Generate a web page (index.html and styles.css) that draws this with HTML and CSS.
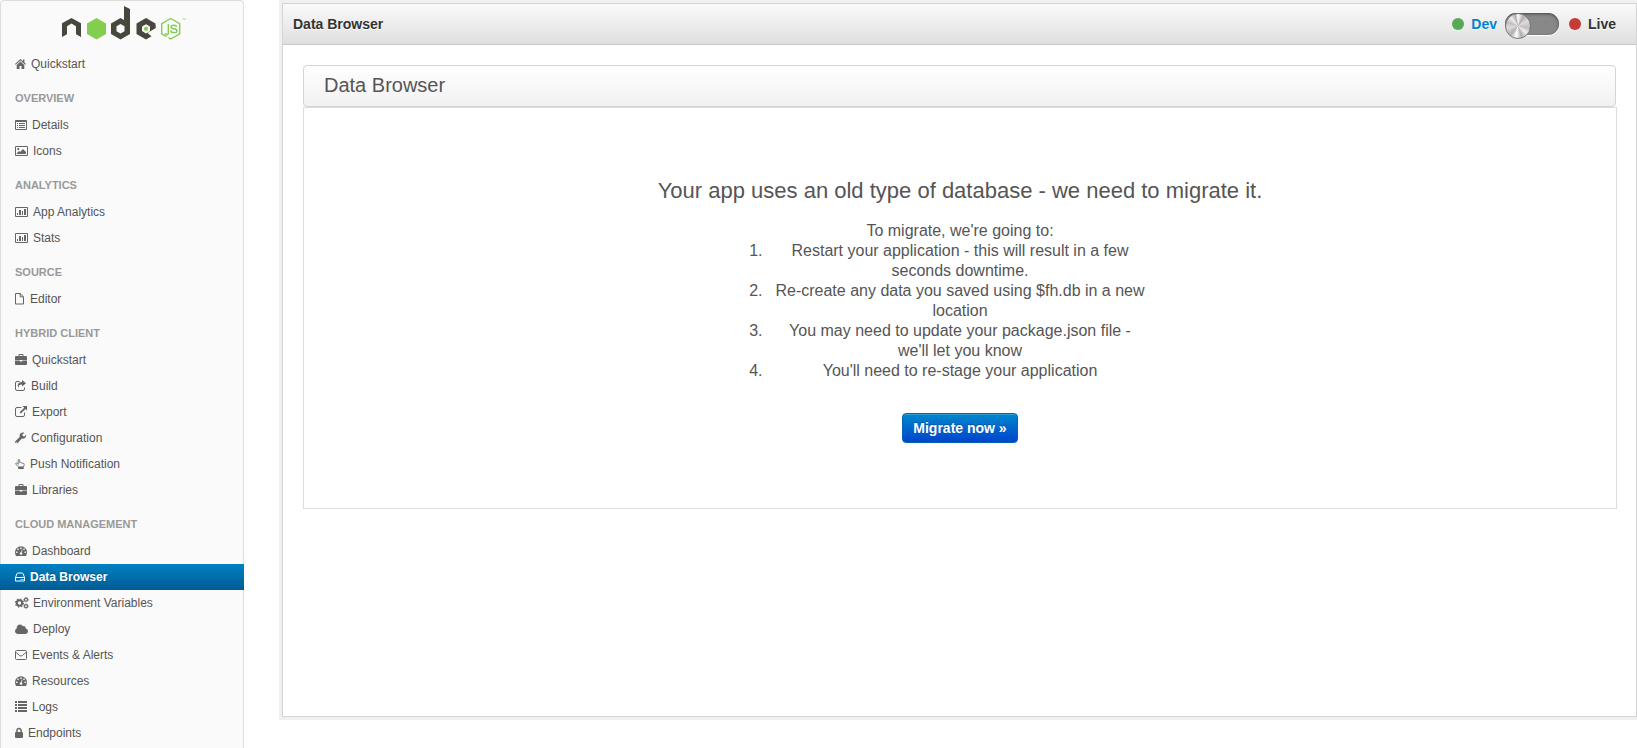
FILE: index.html
```html
<!DOCTYPE html>
<html lang="en">
<head>
<meta charset="utf-8">
<title>Data Browser</title>
<link rel="stylesheet" href="styles.css">
</head>
<body>
<svg class="sprite" aria-hidden="true">
  <symbol id="home" viewBox="0 0 12 12"><path d="M5.5 1 0 5.9l.8.8L5.5 2.6l4.7 4.1.8-.8-1.6-1.4V1.4H8v1.8zM5.5 3.6 1.7 7v4h2.8V8h2v3h2.8V7z"/></symbol>
  <symbol id="list-alt" viewBox="0 0 13 12"><path fill-rule="evenodd" d="M1 1h10q1 0 1 1v8q0 1-1 1H1q-1 0-1-1V2q0-1 1-1zm0 2v7h10V3zM2 4h1v1H2zm2 0h6v1H4zM2 6h1v1H2zm2 0h6v1H4zM2 8h1v1H2zm2 0h6v1H4z"/></symbol>
  <symbol id="picture" viewBox="0 0 14 12"><path fill-rule="evenodd" d="M1 1h11q1 0 1 1v8q0 1-1 1H1q-1 0-1-1V2q0-1 1-1zm0 1v8h11V2zm1 7V8l2-2 1 1 3-3 3 3v2z"/><circle cx="3.2" cy="4.1" r="1.1"/></symbol>
  <symbol id="chart" viewBox="0 0 14 12"><path fill-rule="evenodd" d="M1 1h11q1 0 1 1v8q0 1-1 1H1q-1 0-1-1V2q0-1 1-1zm0 1v8h11V2zM2 7h1v2H2zm2-3h2v5H4zm3 1h1v4H7zM9 3h2v6H9z"/></symbol>
  <symbol id="file" viewBox="0 0 11 12"><path fill="none" stroke="currentColor" d="M.5.5h4.700l3.300 3.300v7.200H.5zM5.200.5v3.300h3.300"/></symbol>
  <symbol id="briefcase" viewBox="0 0 13 12"><path fill-rule="evenodd" d="M3.500 2V1q0-1 1-1h3q1 0 1 1v1H11q1 0 1 1v3H0V3q0-1 1-1zm1 0h3V1h-3zM0 6.500h4.500q0 1 1 1h1q1 0 1-1H12V10q0 1-1 1H1q-1 0-1-1z"/></symbol>
  <symbol id="share" viewBox="0 0 12 12"><path d="M7 0l4 3.200-4 3.200V4.500C4.500 4.500 3.300 5.400 3.800 8 1.500 5 3.300 2 7 2z"/><path fill="none" stroke="currentColor" d="M4.500 1.500H2Q.5 1.500.5 3v6q0 1.500 1.500 1.500h6q1.500 0 1.500-1.500V7.500"/></symbol>
  <symbol id="external" viewBox="0 0 13 12"><path d="M7.500 0H12v4.500l-1.500-1.500-4.600 4.600-1.300-1.300L9.200 1.700z"/><path fill="none" stroke="currentColor" d="M6.500 1.500H2Q.5 1.500.5 3v6q0 1.500 1.500 1.500h6q1.500 0 1.500-1.500V6.500"/></symbol>
  <symbol id="wrench" viewBox="0 0 12 12"><path fill-rule="evenodd" d="M.4 9.200 4.700 5C4 2.300 6.300-.1 9.300.8L7.400 2.500l.3 1.500 1.600.4 1.800-1.600c.4 2.600-1.700 4.400-4.200 3.800L2.600 11C1.300 12-.8 10.600.4 9.200zM1.400 10a.5.5 0 1 0 .1 0z"/></symbol>
  <symbol id="hand" viewBox="0 0 12 12"><path fill="none" stroke="currentColor" stroke-width=".9" stroke-linejoin="round" d="M3.500 6.800V1.500q.8-1.500 1.600 0v3q1-.5 1.600.3 1-.5 1.600.4 1.700-.3 1.700 1.200 0 1.800-1 3H4Q2.500 7.500.8 6.200C.3 5 2 4.300 3.500 6"/><path d="M3.500 9h6v2.500h-6z"/></symbol>
  <symbol id="dashboard" viewBox="0 0 13 12"><path fill-rule="evenodd" d="M6 1.200A6 6 0 0 0 0 7q0 2 1 4h10q1-2 1-4a6 6 0 0 0-6-5.800zM5.200 2.500h1.500V4H5.200zM2.300 3.600h1.400v1.400H2.300zm6 0h1.400v1.400H8.300zM1.100 6.500h1.400v1.400H1.100zm8.400 0h1.400v1.400H9.500zM6.900 4.500l.7.200-.8 2.800q1 .8.400 1.800-.6.800-1.700.4-1.300-.8-.6-1.900.4-.6 1.200-.6z"/></symbol>
  <symbol id="hdd" viewBox="0 0 11 12"><path fill="none" stroke="currentColor" d="M.5 6.500 2 2.500q.2-.5 1-.5h4q.8 0 1 .5l1.500 4V10H.5V6.500h9"/><path d="M5.500 8h1v1h-1zm2 0h1v1h-1z"/></symbol>
  <symbol id="cogs" viewBox="0 0 14 12"><g fill="none" stroke="currentColor"><circle cx="4.500" cy="6" r="2.700" stroke-width="2"/><circle cx="4.500" cy="6" r="4" stroke-dasharray="1.570" stroke-width="1.200"/><circle cx="11" cy="2.700" r="1.500" stroke-width="1.200"/><circle cx="11" cy="2.700" r="2.300" stroke-dasharray="1.030" stroke-width=".7"/><circle cx="11" cy="9.200" r="1.500" stroke-width="1.200"/><circle cx="11" cy="9.200" r="2.300" stroke-dasharray="1.030" stroke-width=".7"/></g></symbol>
  <symbol id="cloud" viewBox="0 0 14 12"><path d="M3 11Q0 10.700 0 8q0-1.600 1.700-2.500C1.400 3.300 3 1.500 5 1.500q2 0 3 1.700 2.400-.6 2.700 2Q13 6 13 8.200q0 2.500-2.600 2.800z"/></symbol>
  <symbol id="envelope" viewBox="0 0 13 12"><path fill="none" stroke="currentColor" d="M1.500 1.500h9q1 0 1 1v7q0 1-1 1h-9q-1 0-1-1v-7q0-1 1-1zM.8 3.200 4.800 6.600q1.200 1 2.400 0l4-3.400"/></symbol>
  <symbol id="list" viewBox="0 0 13 12"><path d="M0 0h2v2H0zm3 0h9v2H3zM0 3h2v2H0zm3 0h9v2H3zM0 6h2v2H0zm3 0h9v2H3zM0 9h2v2H0zm3 0h9v2H3z"/></symbol>
  <symbol id="lock" viewBox="0 0 9 12"><path fill-rule="evenodd" d="M1.200 5V3.500Q1.400.8 4 .8t2.800 2.700V5Q8 5 8 6v4q0 1-1 1H1q-1 0-1-1V6q0-1 1.200-1zm1.500 0h2.600V3.500Q5.200 2.200 4 2.200T2.700 3.500z"/></symbol>
</svg>

<div class="layout">
  <nav class="sidebar" aria-label="App sections">
    <svg class="logo" viewBox="0 0 124 34" role="img" aria-label="node.js">
      <g fill="#46483e">
        <path d="M0 17.300 9.500 12l9.500 5.300V31l-5-2.800v-8L9.500 17.500 5 20.200v8L0 31z"/>
        <path fill-rule="evenodd" d="M62 0l6 3v25l-9.500 5.500L49 28V17.500l9.500-5.500 3.500 2zM58.500 18 54.500 20.300v4.900l4 2.300 4-2.300v-4.900z"/>
        <path fill-rule="evenodd" d="M74.500 17.500 84 12l9.500 5.500v4.500L85.500 27l4 3.200-5.500 3.300-9.500-5.500zM84 18.300l-4 2.200v4.600l4 2.300 4-2.300v-4.600z"/>
      </g>
      <path fill="#83cd4f" d="M34.500 12 44 17.500V28l-9.500 5.500L25 28V17.500z"/>
      <path fill="#46483e" d="M88 20.500l5.500-1V22L88 25z"/>
      <circle cx="84" cy="22.800" r="2.100" fill="#83cd4f"/>
      <g fill="none" stroke="#83cd4f" stroke-width="1.400">
        <path d="M104.500 30.700l-4.800-2.800V17.600l9-5.100 9 5.100v10.300l-9 5.100-2.200-1.300"/>
        <path d="M106.300 17.800v9q0 2-1.300 1.900l-2.300-1.200"/>
        <path d="M114.600 20.900q-.3-1.700-2.800-1.700-2.600 0-2.600 1.700 0 1.500 2.700 1.800 3.100.3 3.100 2 0 1.900-3 1.900-3.200 0-3.300-2.200"/>
      </g>
      <path fill="#83cd4f" d="M120.500 12.500h1.500v.7h-1.500zm2 0h.8v1.500h-.8z"/>
    </svg>
    <ul class="nav">
      <li><a href="#"><svg class="icon w12"><use href="#home"/></svg>Quickstart</a></li>
    </ul>
    <h2>Overview</h2>
    <ul class="nav">
      <li><a href="#"><svg class="icon w13"><use href="#list-alt"/></svg>Details</a></li>
      <li><a href="#"><svg class="icon w14"><use href="#picture"/></svg>Icons</a></li>
    </ul>
    <h2>Analytics</h2>
    <ul class="nav">
      <li><a href="#"><svg class="icon w14"><use href="#chart"/></svg>App Analytics</a></li>
      <li><a href="#"><svg class="icon w14"><use href="#chart"/></svg>Stats</a></li>
    </ul>
    <h2>Source</h2>
    <ul class="nav">
      <li><a href="#"><svg class="icon w11"><use href="#file"/></svg>Editor</a></li>
    </ul>
    <h2>Hybrid Client</h2>
    <ul class="nav">
      <li><a href="#"><svg class="icon w13"><use href="#briefcase"/></svg>Quickstart</a></li>
      <li><a href="#"><svg class="icon w12"><use href="#share"/></svg>Build</a></li>
      <li><a href="#"><svg class="icon w13"><use href="#external"/></svg>Export</a></li>
      <li><a href="#"><svg class="icon w12"><use href="#wrench"/></svg>Configuration</a></li>
      <li><a href="#"><svg class="icon w11"><use href="#hand"/></svg>Push Notification</a></li>
      <li><a href="#"><svg class="icon w13"><use href="#briefcase"/></svg>Libraries</a></li>
    </ul>
    <h2>Cloud Management</h2>
    <ul class="nav">
      <li><a href="#"><svg class="icon w13"><use href="#dashboard"/></svg>Dashboard</a></li>
      <li><a class="active" href="#" aria-current="page"><svg class="icon w11"><use href="#hdd"/></svg>Data Browser</a></li>
      <li><a href="#"><svg class="icon w14"><use href="#cogs"/></svg>Environment Variables</a></li>
      <li><a href="#"><svg class="icon w14"><use href="#cloud"/></svg>Deploy</a></li>
      <li><a href="#"><svg class="icon w13"><use href="#envelope"/></svg>Events &amp; Alerts</a></li>
      <li><a href="#"><svg class="icon w13"><use href="#dashboard"/></svg>Resources</a></li>
      <li><a href="#"><svg class="icon w13"><use href="#list"/></svg>Logs</a></li>
      <li><a href="#"><svg class="icon w9"><use href="#lock"/></svg>Endpoints</a></li>
    </ul>
  </nav>

  <main class="main">
    <header class="topbar">
      <h1>Data Browser</h1>
      <div class="env">
        <span class="dot dev"></span>
        <label class="current" for="env-switch">Dev</label>
        <input class="switch" id="env-switch" type="checkbox" role="switch">
        <span class="dot live"></span>
        <label for="env-switch">Live</label>
      </div>
    </header>
    <section class="content">
      <h2 class="panel-title">Data Browser</h2>
      <div class="panel">
        <h3>Your app uses an old type of database - we need to migrate it.</h3>
        <div class="steps">
          <p>To migrate, we're going to:</p>
          <ol>
            <li>Restart your application - this will result in a few seconds downtime.</li>
            <li>Re-create any data you saved using $fh.db in a new location</li>
            <li>You may need to update your package.json file - we'll let you know</li>
            <li>You'll need to re-stage your application</li>
          </ol>
        </div>
        <button class="migrate" type="button">Migrate now »</button>
      </div>
    </section>
  </main>
</div>
</body>
</html>
```
FILE: styles.css
```css
* {
  box-sizing: border-box;
}

body {
  margin: 0;
  background: #fff;
  color: #555;
  font-family: "Liberation Sans", Arial, sans-serif;
  font-size: 13px;
  line-height: 20px;
}

h1, h2, h3, p, ul, ol {
  margin: 0;
  padding: 0;
}

.sprite {
  position: absolute;
  width: 0;
  height: 0;
}

.layout {
  display: flex;
  gap: 38px;
  height: 100vh;
  overflow: hidden;
}

.sidebar {
  flex: 0 0 244px;
  min-height: 100%;
  border: 1px solid #ddd;
  border-bottom: 0;
  border-radius: 4px 4px 0 0;
  background: #fafafa;
}

.logo {
  display: block;
  width: 124px;
  height: 34px;
  margin: 5px 0 11px 61px;
}

.sidebar h2 {
  margin-top: 8px;
  padding: 3px 14px 4px;
  color: #999;
  font-size: 11px;
  text-transform: uppercase;
}

.nav {
  list-style: none;
}

.nav a {
  display: flex;
  align-items: center;
  gap: 4px;
  margin: 0 -1px;
  padding: 3px 15px;
  color: #555;
  font-size: 12px;
  text-decoration: none;
}

.nav .active {
  background: linear-gradient(#0081c2, #005b94);
  color: #fff;
  font-weight: bold;
  text-shadow: 0 -1px 0 rgba(0, 0, 0, .2);
}

.icon {
  flex: none;
  height: 12px;
  color: #666;
  fill: currentColor;
}

.active .icon {
  color: #fff;
}

.w9 { width: 9px; }
.w11 { width: 11px; }
.w12 { width: 12px; }
.w13 { width: 13px; }
.w14 { width: 14px; }

.main {
  flex: 1;
  min-height: 400px;
  margin: 3px 0 31px;
  border: 1px solid #d4d4d4;
  background: #fff;
  box-shadow: 0 0 0 3px #f0f0f0;
}

.topbar {
  display: flex;
  align-items: center;
  justify-content: space-between;
  height: 41px;
  padding: 0 20px 0 10px;
  border-bottom: 1px solid #c8c8c8;
  background: linear-gradient(#fafafa, #dfdfdf);
  color: #333;
  font-size: 14px;
  font-weight: bold;
  text-shadow: 0 1px 0 #fff;
}

.topbar h1 {
  font-size: 14px;
}

.env {
  display: flex;
  align-items: center;
}

.dot {
  width: 12px;
  height: 12px;
  margin-right: 7px;
  border-radius: 50%;
}

.dev { background: #57a957; }
.live { background: #c43c35; }
.current { color: #0081cc; }

.switch {
  appearance: none;
  width: 54px;
  height: 22px;
  margin: 0 10px 0 8px;
  border-radius: 11px;
  background: #888;
  box-shadow: inset 0 1px 3px #444, 0 1px 0 #fff;
}

.switch::before {
  content: "";
  display: block;
  width: 24px;
  height: 24px;
  border: 1px solid #777;
  border-radius: 50%;
  background: conic-gradient(#fff, #b5acac 30deg, #ddd 60deg, #c5bcbc 100deg, #eee 130deg, #b5acac 160deg, #fff 190deg, #b5acac 220deg, #ddd 260deg, #c5bcbc 290deg, #eee 320deg, #b5acac 345deg, #fff);
}

.content {
  padding: 20px 19px 20px 20px;
}

.panel-title {
  margin-right: 1px;
  padding: 0 20px 2px;
  border: 1px solid #d4d4d4;
  border-radius: 4px;
  background: linear-gradient(#fff, #f1f1f1);
  font-size: 20px;
  font-weight: normal;
  line-height: 38px;
}

.panel {
  display: flex;
  flex-direction: column;
  align-items: center;
  padding: 63px 20px 65px;
  border: 1px solid #ddd;
  text-align: center;
}

.panel h3 {
  font-size: 22px;
  font-weight: normal;
  line-height: 40px;
}

.steps {
  max-width: 386px;
  margin: 10px 0 32px;
  font-size: 16px;
}

.steps li {
  padding: 0 6px;
}

.migrate {
  height: 30px;
  padding: 0 10px;
  border: 1px solid #0064b5;
  border-radius: 4px;
  background: linear-gradient(#08c, #04c);
  box-shadow: inset 0 1px 0 rgba(255, 255, 255, .2);
  color: #fff;
  font: bold 14px/20px "Liberation Sans", Arial, sans-serif;
  text-shadow: 0 -1px 0 rgba(0, 0, 0, .25);
}
```
